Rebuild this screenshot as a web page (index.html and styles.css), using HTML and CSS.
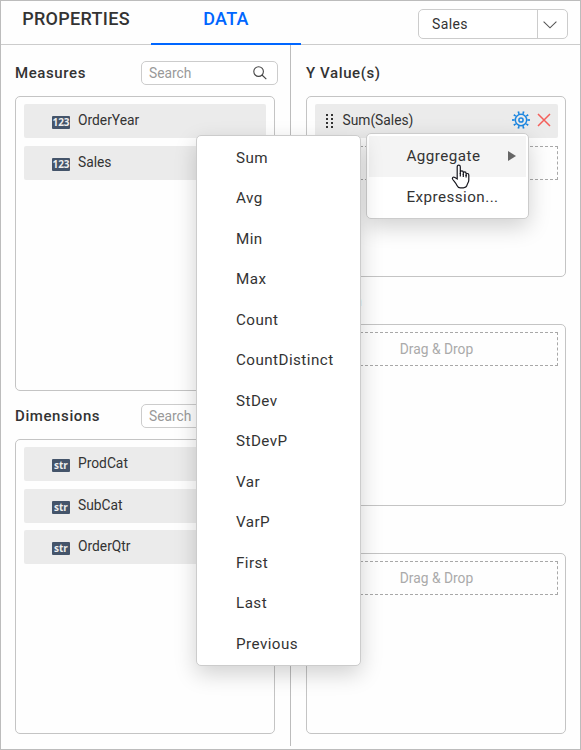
FILE: index.html
```html
<!DOCTYPE html>
<html lang="en">
<head>
<meta charset="utf-8">
<title>Data panel</title>
<link rel="stylesheet" href="styles.css">
</head>
<body>
<div class="panel">
  <header class="header">
    <div class="tab">PROPERTIES</div>
    <div class="tab active">DATA</div>
    <div class="select">
      <span class="select-value">Sales</span>
      <span class="select-arrow"><svg width="14" height="8" viewBox="0 0 14 8"><path d="M.6.6 7 6.8 13.4.6"/></svg></span>
    </div>
  </header>
  <main class="body">
    <section class="column fields">
      <div class="heading"><h2>Measures</h2>
        <div class="search"><span>Search</span><svg width="14" height="14" viewBox="0 0 14 14"><circle cx="5.6" cy="5.6" r="4.8"/><path d="M9 9l4.3 4.2"/></svg></div>
      </div>
      <div class="box tall">
        <div class="item"><b class="type">123</b>OrderYear</div>
        <div class="item"><b class="type">123</b>Sales</div>
      </div>
      <div class="heading second"><h2>Dimensions</h2>
        <div class="search"><span>Search</span><svg width="14" height="14" viewBox="0 0 14 14"><circle cx="5.6" cy="5.6" r="4.8"/><path d="M9 9l4.3 4.2"/></svg></div>
      </div>
      <div class="box tall">
        <div class="item"><b class="type">str</b>ProdCat</div>
        <div class="item"><b class="type">str</b>SubCat</div>
        <div class="item"><b class="type">str</b>OrderQtr</div>
      </div>
    </section>
    <section class="column targets">
      <div class="heading"><h2>Y Value(s)</h2></div>
      <div class="box">
        <div class="item value">
          <svg class="grip" width="8" height="14" viewBox="0 0 8 14"><path d="M0 0h2v2H0zM5 0h2v2H5zM0 4h2v2H0zM5 4h2v2H5zM0 8h2v2H0zM5 8h2v2H5zM0 12h2v2H0zM5 12h2v2H5z"/></svg>
          <span class="value-name">Sum(Sales)</span>
          <svg class="gear" width="18" height="18" viewBox="0 0 18 18"><circle cx="9" cy="9" r="5.7"/><circle cx="9" cy="9" r="2.1"/><circle class="teeth" cx="9" cy="9" r="7.6" pathLength="120"/></svg>
          <svg class="remove" width="14" height="14" viewBox="0 0 14 14"><path d="M1 1l12 12M13 1 1 13"/></svg>
        </div>
        <div class="drop"></div>
      </div>
      <div class="heading later"><h2 class="wide">Column</h2></div>
      <div class="box"><div class="drop">Drag &amp; Drop</div></div>
      <div class="heading later"><h2>Row</h2></div>
      <div class="box"><div class="drop">Drag &amp; Drop</div></div>
    </section>
  </main>
  <ul class="menu context">
    <li class="hover">Aggregate<svg width="8" height="10" viewBox="0 0 8 10"><path d="M0 0l8 5-8 5z"/></svg></li>
    <li>Expression...</li>
  </ul>
  <ul class="menu functions">
    <li>Sum</li><li>Avg</li><li>Min</li><li>Max</li><li>Count</li><li>CountDistinct</li><li>StDev</li><li>StDevP</li><li>Var</li><li>VarP</li><li>First</li><li>Last</li><li>Previous</li>
  </ul>
  <svg class="pointer" width="19" height="25" viewBox="0 0 19 25"><path d="M6.2 15V2.8C6.2.5 9.3.5 9.3 2.8V10 8.3c0-2 3-2 3 0V11 9.3c0-1.9 2.8-1.8 2.8.1V12v-1.2c0-1.8 2.7-1.7 2.7.2v5c0 2.5-1.5 3.5-1.8 5.2-.4 1.7-1.6 2.6-3.6 2.6H9.3c-1.8 0-2.6-.8-3.3-2.4-.8-1.9-2.6-3.8-4.2-5.9-1.3-1.9.6-3.2 2.2-1.9z"/><path d="M9.3 9v3.5M12.3 10v3M15.1 11v2.5"/></svg>
</div>
</body>
</html>
```
FILE: styles.css
```css
* { box-sizing: border-box; }
body { margin: 0; font-family: Roboto, "Liberation Sans", sans-serif; color: #333; background: #fff; }
svg { display: block; flex: none; fill: none; }
.panel { position: relative; width: 581px; height: 750px; border: 1px solid #bcbcbc; background: #fefefe; overflow: hidden; }
.header { display: flex; height: 44px; border-bottom: 1px solid #ccc; }
.tab { width: 150px; height: 44px; font-size: 18px; font-weight: 500; line-height: 35px; text-align: center; letter-spacing: .3px; }
.tab.active { color: #06f; border-bottom: 2px solid #06f; }
.select { display: flex; width: 150px; height: 30px; margin: 8px 0 0 117px; border: 1px solid #ccc; border-radius: 5px; background: #fff; overflow: hidden; }
.select-value { flex: 1; padding-left: 13px; font-size: 14px; line-height: 28px; letter-spacing: .4px; }
.select-arrow { display: flex; width: 30px; padding: 2px 6px 0 0; align-items: center; justify-content: center; border-left: 1px solid #ccc; }
.select-arrow svg { stroke: #555; stroke-width: 1.1; }
.body { display: flex; height: 701px; }
.column { width: 290px; padding: 16px 12px 0 14px; }
.fields { border-right: 1px solid #bcbcbc; }
.targets { width: 289px; padding-left: 15px; }
.heading { display: flex; height: 35px; justify-content: space-between; }
.heading.second { padding-top: 13px; height: 48px; }
.heading.later { padding-top: 12px; height: 47px; }
h2 { margin: 0; font-size: 15px; font-weight: 500; line-height: 24px; letter-spacing: .6px; }
h2.wide { letter-spacing: .75px; }
.search { display: flex; width: 137px; height: 24px; padding: 0 10px 0 7px; align-items: center; justify-content: space-between; border: 1px solid #ccc; border-radius: 5px; color: #999; background: #fff; font-size: 13.8px; }
.search svg { stroke: #444; stroke-width: 1.1; }
.box { display: flex; width: 260px; height: 181.4px; padding: 7px 7px 0 8px; flex-direction: column; gap: 7.5px; border: 1px solid #c4c4c4; border-radius: 5px; }
.tall { height: 295px; padding-right: 8px; }
.item { display: flex; height: 34px; flex: none; padding: 0 0 2px 28px; align-items: center; border-radius: 2px; background: #ebebeb; font-size: 13.8px; }
.type { width: 18px; height: 13px; margin: 5px 8px 0 0; border-radius: 1px; color: #eee; background: #44546a; font: 700 10px/12px "Open Sans", sans-serif; text-align: center; }
.value { padding: 0 7px 3px 11px; }
.grip { margin-top: 3px; fill: #333; }
.value-name { flex: 1; margin-left: 8.5px; }
.gear { margin-top: 1px; stroke: #1c86e0; stroke-width: 1.5; }
.teeth { stroke-width: 2.6; stroke-dasharray: 4 8; stroke-dashoffset: 2; }
.remove { margin-left: 7px; stroke: #f45f5a; stroke-width: 1.5; }
.drop { height: 34px; flex: none; border: 1px dashed #a8a8a8; color: #aaa; font-size: 13.8px; line-height: 33px; text-align: center; }
.menu { position: absolute; margin: 0; list-style: none; border: 1px solid #ccc; border-radius: 5px; background: #fff; box-shadow: 0 8px 22px rgba(0,0,0,.18); font-size: 15.2px; letter-spacing: .45px; }
.menu li { display: flex; height: 40.5px; align-items: center; }
.context { left: 365px; top: 132px; width: 163px; height: 86px; padding: 2px; }
.context li { padding-left: 37.5px; }
.context .hover { padding-right: 10px; justify-content: space-between; background: #f4f4f4; }
.context li svg { fill: #666; }
.functions { left: 195px; top: 134px; width: 165px; height: 531px; padding: 1px; }
.functions li { padding: 1px 0 0 38px; }
.pointer { position: absolute; left: 450px; top: 163px; fill: #fff; stroke: #16161d; stroke-width: 1.2; }
```
